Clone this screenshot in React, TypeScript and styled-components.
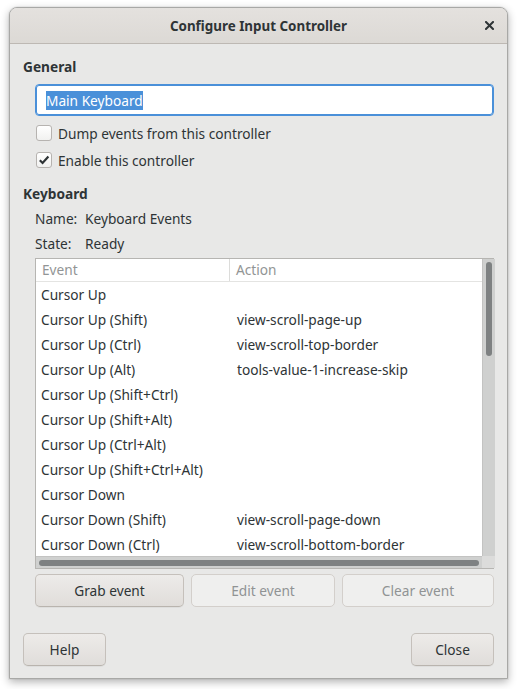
import React from "react";
import styled, { createGlobalStyle, css } from "styled-components";

const Global = createGlobalStyle`
  html, body { margin: 0; padding: 0; background: #ffffff; }
  body { font-family: "Noto Sans", "DejaVu Sans", sans-serif; font-size: 13.7px; color: #2e3436; }
  * { box-sizing: border-box; }
`;

const Page = styled.div`
  width: 518px;
  height: 689px;
  padding: 7px 10px 10px 9px;
`;

const Window = styled.div`
  width: 499px;
  height: 672px;
  display: flex;
  flex-direction: column;
  border: 1px solid #a8a8a6;
  border-radius: 8px 8px 0 0;
  background: #e8e8e7;
  box-shadow: 0 3px 9px rgba(0, 0, 0, 0.3), 0 0 0 1px rgba(0, 0, 0, 0.04);
  overflow: hidden;
`;

const TitleBar = styled.div`
  height: 36px;
  flex: none;
  display: grid;
  grid-template-columns: 40px 1fr 40px;
  align-items: center;
  background: linear-gradient(#e4e1de, #dcd9d5);
  border-bottom: 1px solid #bdb8b3;
`;

const Title = styled.div`
  grid-column: 2;
  text-align: center;
  font-weight: bold;
  font-size: 13.4px;
  color: #2e3436;
  padding-top: 1px;
`;

const CloseBox = styled.div`
  display: flex;
  justify-content: flex-end;
  padding-right: 13px;
`;

const Body = styled.div`
  flex: 1;
  display: flex;
  flex-direction: column;
  padding: 13px 13px 0 13px;
`;

const Heading = styled.div<{ $top?: number }>`
  font-weight: bold;
  line-height: 20px;
  margin-top: ${(p) => p.$top ?? 0}px;
`;

const Indented = styled.div`
  padding-left: 12px;
  display: flex;
  flex-direction: column;
`;

const Entry = styled.div`
  margin-top: 7px;
  height: 32px;
  border: 1px solid #4a90d9;
  box-shadow: inset 0 0 0 1px #4a90d9;
  border-radius: 4px;
  background: #ffffff;
  display: flex;
  align-items: center;
  padding-left: 10px;
`;

const Selected = styled.span`
  background: #4a90d9;
  color: #ffffff;
  line-height: 19px;
  padding: 0;
`;

const CheckRow = styled.label<{ $top: number }>`
  display: flex;
  align-items: center;
  gap: 6px;
  height: 20px;
  margin-top: ${(p) => p.$top}px;
  padding-left: 1px;
`;

const Box = styled.span`
  width: 16px;
  height: 16px;
  border: 1px solid #b6b3b0;
  border-radius: 3px;
  background: linear-gradient(#ffffff, #f1f1f0);
  display: flex;
  align-items: center;
  justify-content: center;
`;

const InfoRow = styled.div<{ $top: number }>`
  display: flex;
  line-height: 20px;
  margin-top: ${(p) => p.$top}px;
`;

const InfoLabel = styled.span<{ $w: number }>`
  width: ${(p) => p.$w}px;
`;

const List = styled.div`
  margin-top: 4px;
  height: 311px;
  border: 1px solid #b6b5b2;
  background: #ffffff;
  display: grid;
  grid-template-columns: 1fr 13px;
  grid-template-rows: 1fr 12px;
`;

const ListMain = styled.div`
  overflow: hidden;
  display: flex;
  flex-direction: column;
`;

const HeaderRow = styled.div`
  display: grid;
  grid-template-columns: 194px 1fr;
  height: 23px;
  flex: none;
  border-bottom: 1px solid #e4e4e2;
`;

const HeaderCell = styled.div<{ $divider?: boolean }>`
  color: #929595;
  padding-left: 6px;
  line-height: 22px;
  border-right: ${(p) => (p.$divider ? "1px solid #dcdcda" : "none")};
`;

const Row = styled.div`
  display: grid;
  grid-template-columns: 194px 1fr;
  height: 25px;
  flex: none;
  align-items: center;
`;

const Cell = styled.div<{ $pad: number }>`
  padding-left: ${(p) => p.$pad}px;
  white-space: nowrap;
`;

const VTrough = styled.div`
  background: #cfd0cf;
  border-left: 1px solid #c3c3c2;
  padding: 3px 3px 0 3px;
`;

const VThumb = styled.div`
  width: 6px;
  height: 94px;
  border-radius: 3px;
  background: #7e8182;
`;

const HTrough = styled.div`
  background: #cfd0cf;
  border-top: 1px solid #c3c3c2;
  padding: 3px 3px 0 3px;
`;

const HThumb = styled.div`
  height: 6px;
  width: 440px;
  border-radius: 3px;
  background: #7e8182;
`;

const Corner = styled.div`
  background: #dcdcdb;
`;

const ButtonRow = styled.div`
  margin-top: 5px;
  display: grid;
  grid-template-columns: 149px 144px 152px;
  justify-content: space-between;
`;

const Button = styled.div<{ $disabled?: boolean; $w?: number }>`
  height: 33px;
  ${(p) => (p.$w ? `width: ${p.$w}px;` : "")}
  display: flex;
  align-items: center;
  justify-content: center;
  border-radius: 5px;
  ${(p) =>
    p.$disabled
      ? css`
          background: #efefee;
          border: 1px solid #d3cfcb;
          color: #909394;
        `
      : css`
          background: linear-gradient(#edebe9, #e0ddda);
          border: 1px solid #c5c0bb;
          border-bottom-color: #b9b4ae;
          color: #2e3436;
          box-shadow: 0 1px rgba(0, 0, 0, 0.04);
        `}
`;

const Footer = styled.div`
  margin-top: 26px;
  display: flex;
  justify-content: space-between;
`;

const rows: [string, string][] = [
  ["Cursor Up", ""],
  ["Cursor Up (Shift)", "view-scroll-page-up"],
  ["Cursor Up (Ctrl)", "view-scroll-top-border"],
  ["Cursor Up (Alt)", "tools-value-1-increase-skip"],
  ["Cursor Up (Shift+Ctrl)", ""],
  ["Cursor Up (Shift+Alt)", ""],
  ["Cursor Up (Ctrl+Alt)", ""],
  ["Cursor Up (Shift+Ctrl+Alt)", ""],
  ["Cursor Down", ""],
  ["Cursor Down (Shift)", "view-scroll-page-down"],
  ["Cursor Down (Ctrl)", "view-scroll-bottom-border"],
];

export default function App() {
  return (
    <>
      <Global />
      <Page>
        <Window>
          <TitleBar>
            <Title>Configure Input Controller</Title>
            <CloseBox>
              <svg width="9" height="9" viewBox="0 0 9 9">
                <path d="M1 1 L8 8 M8 1 L1 8" stroke="#2e3436" strokeWidth="2" strokeLinecap="square" />
              </svg>
            </CloseBox>
          </TitleBar>
          <Body>
            <Heading>General</Heading>
            <Indented>
              <Entry>
                <Selected>Main Keyboard</Selected>
              </Entry>
              <CheckRow $top={7}>
                <Box />
                Dump events from this controller
              </CheckRow>
              <CheckRow $top={7}>
                <Box>
                  <svg width="12" height="12" viewBox="0 0 12 12">
                    <path d="M1.8 6.2 L4.6 9 L10.4 2.6" fill="none" stroke="#2e3436" strokeWidth="2.2" />
                  </svg>
                </Box>
                Enable this controller
              </CheckRow>
            </Indented>
            <Heading $top={14}>Keyboard</Heading>
            <Indented>
              <InfoRow $top={5}>
                <InfoLabel $w={50}>Name:</InfoLabel>
                Keyboard Events
              </InfoRow>
              <InfoRow $top={5}>
                <InfoLabel $w={50}>State:</InfoLabel>
                Ready
              </InfoRow>
              <List>
                <ListMain>
                  <HeaderRow>
                    <HeaderCell $divider>Event</HeaderCell>
                    <HeaderCell>Action</HeaderCell>
                  </HeaderRow>
                  {rows.map(([e, a]) => (
                    <Row key={e}>
                      <Cell $pad={5}>{e}</Cell>
                      <Cell $pad={7}>{a}</Cell>
                    </Row>
                  ))}
                </ListMain>
                <VTrough>
                  <VThumb />
                </VTrough>
                <HTrough>
                  <HThumb />
                </HTrough>
                <Corner />
              </List>
              <ButtonRow>
                <Button>Grab event</Button>
                <Button $disabled>Edit event</Button>
                <Button $disabled>Clear event</Button>
              </ButtonRow>
            </Indented>
            <Footer>
              <Button $w={83}>Help</Button>
              <Button $w={83}>Close</Button>
            </Footer>
          </Body>
        </Window>
      </Page>
    </>
  );
}
